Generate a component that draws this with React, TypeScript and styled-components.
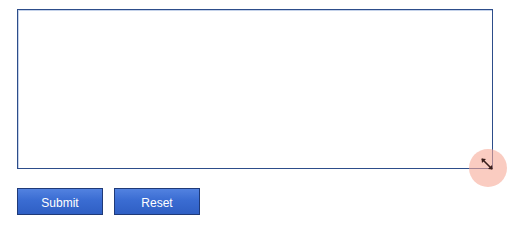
import styled, { createGlobalStyle } from "styled-components";

const GlobalStyle = createGlobalStyle`
  html, body {
    margin: 0;
    padding: 0;
    background: #ffffff;
    font-family: "Liberation Sans", Arial, sans-serif;
  }
`;

export default function App() {
  return (
    <>
      <GlobalStyle />
      <Form>
        <Field>
          <TextArea />
          <ResizeHint>
            <svg width="14" height="14" viewBox="0 0 14 14">
              <path d="M2 2 L12 12" stroke="#3a1e1a" strokeWidth="1.6" />
              <path d="M1.5 1.5 L6 2 L2 6 Z" fill="#3a1e1a" />
              <path d="M12.5 12.5 L8 12 L12 8 Z" fill="#3a1e1a" />
            </svg>
          </ResizeHint>
        </Field>
        <Actions>
          <Button type="button">Submit</Button>
          <Button type="button">Reset</Button>
        </Actions>
      </Form>
    </>
  );
}

const Form = styled.div`
  display: flex;
  flex-direction: column;
  align-items: flex-start;
  gap: 19px;
  padding: 9px 0 0 17px;
`;

const Field = styled.div`
  position: relative;
  width: 476px;
  height: 160px;
`;

const TextArea = styled.textarea`
  box-sizing: border-box;
  display: block;
  width: 476px;
  height: 160px;
  margin: 0;
  padding: 4px;
  border: 1px solid #2d4d8a;
  box-shadow: inset 1px 1px 0 #c4d2ea;
  background: #ffffff;
  resize: none;
  outline: none;
  font-family: "Liberation Sans", Arial, sans-serif;
  font-size: 13px;
`;

const ResizeHint = styled.div`
  position: absolute;
  right: -14px;
  bottom: -18px;
  width: 38px;
  height: 38px;
  border-radius: 50%;
  background: rgba(246, 170, 152, 0.6);
  display: flex;
  align-items: center;
  justify-content: center;

  & > svg {
    margin: -8px 0 0 -3px;
  }
`;

const Actions = styled.div`
  display: flex;
  gap: 11px;
`;

const Button = styled.button`
  box-sizing: border-box;
  width: 86px;
  height: 27px;
  margin: 0;
  padding: 3px 0 0;
  border: 1px solid #1f3a78;
  background: linear-gradient(#5282e0 0%, #3a6cd2 45%, #2f5fc4 100%);
  color: #ffffff;
  font-family: "Liberation Sans", Arial, sans-serif;
  font-size: 12px;
  cursor: pointer;
`;
